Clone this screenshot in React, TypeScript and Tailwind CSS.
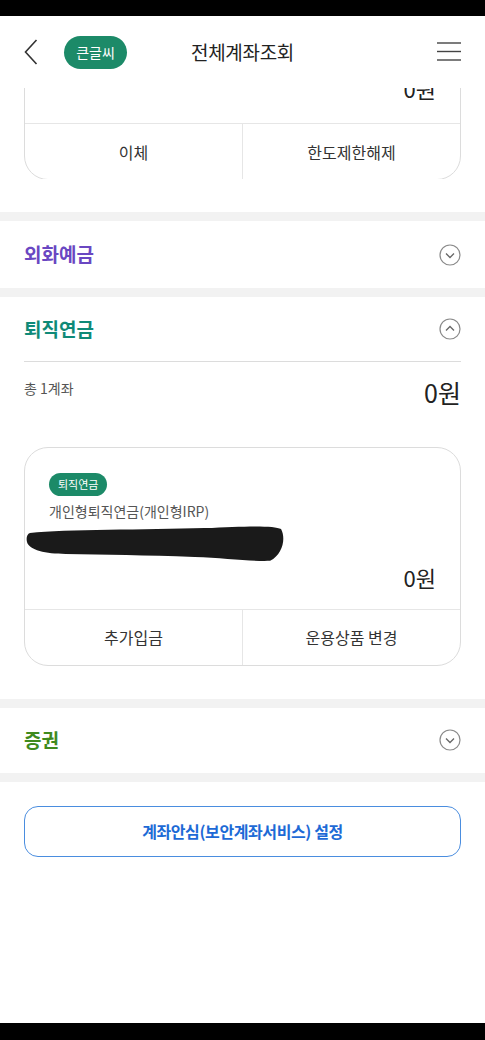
import React from 'react';

const ChevronCircle: React.FC<{ up?: boolean }> = ({ up }) => (
  <svg width="22" height="22" viewBox="0 0 22 22" fill="none">
    <circle cx="11" cy="11" r="10" stroke="#8a8a8a" strokeWidth="1.2" />
    {up ? (
      <polyline points="7,12.5 11,8.5 15,12.5" stroke="#666" strokeWidth="1.3" fill="none" />
    ) : (
      <polyline points="7,9.5 11,13.5 15,9.5" stroke="#666" strokeWidth="1.3" fill="none" />
    )}
  </svg>
);

const Band = () => <div className="h-[9px] bg-[#f2f2f2]" />;

const CardButtons: React.FC<{ left: string; right: string }> = ({ left, right }) => (
  <div className="flex h-[56px] border-t border-[#e6e6e6]">
    <div className="flex-1 flex items-center justify-center text-[16px] text-[#333]">{left}</div>
    <div className="w-px bg-[#e6e6e6]" />
    <div className="flex-1 flex items-center justify-center text-[16px] text-[#333]">{right}</div>
  </div>
);

const App: React.FC = () => {
  return (
    <div
      className="w-[485px] h-[1040px] bg-white flex flex-col overflow-hidden"
      style={{ fontFamily: '"Noto Sans CJK KR", "Noto Sans", sans-serif' }}
    >
      <div className="h-[16px] bg-black shrink-0" />

      {/* header */}
      <div className="h-[72px] shrink-0 grid grid-cols-[1fr_auto_1fr] items-center px-6">
        <div className="flex items-center gap-[26px]">
          <svg width="14" height="26" viewBox="0 0 14 26" fill="none">
            <polyline points="12.5,1 1.5,13 12.5,25" stroke="#333" strokeWidth="1.6" fill="none" />
          </svg>
          <div className="h-[33px] w-[63px] rounded-full bg-[#1c8a68] text-white text-[14px] flex items-center justify-center">
            큰글씨
          </div>
        </div>
        <div className="text-[19px] text-[#222] tracking-[-0.3px]">전체계좌조회</div>
        <div className="flex justify-end">
          <svg width="24" height="20" viewBox="0 0 24 20" fill="none">
            <line x1="0" y1="1" x2="24" y2="1" stroke="#444" strokeWidth="1.4" />
            <line x1="0" y1="9.5" x2="24" y2="9.5" stroke="#444" strokeWidth="1.4" />
            <line x1="0" y1="18" x2="24" y2="18" stroke="#444" strokeWidth="1.4" />
          </svg>
        </div>
      </div>

      {/* clipped card from the section above */}
      <div className="h-[91px] overflow-hidden px-6 shrink-0">
        <div className="-mt-[46px] rounded-[24px] border border-[#dcdcdc]">
          <div className="h-[80px] flex items-end justify-end pr-6 pb-[23px]">
            <span className="text-[22px] leading-[24px] text-[#222]">0원</span>
          </div>
          <CardButtons left="이체" right="한도제한해제" />
        </div>
      </div>

      <div className="h-[33px] shrink-0" />
      <Band />

      {/* 외화예금 */}
      <div className="h-[67px] px-6 flex items-center justify-between">
        <span className="text-[19px] font-bold text-[#6a47c2]">외화예금</span>
        <ChevronCircle />
      </div>
      <Band />

      {/* 퇴직연금 */}
      <div className="px-6">
        <div className="h-[65px] flex items-center justify-between border-b border-[#dcdcdc]">
          <span className="text-[19px] font-bold text-[#0f8a78]">퇴직연금</span>
          <ChevronCircle up />
        </div>
        <div className="flex justify-between items-start pt-[16px]">
          <span className="text-[14px] text-[#555]">총 1계좌</span>
          <span className="text-[25px] leading-[30px] text-[#222] -mt-[1px]">0원</span>
        </div>
        <div className="mt-[40px] rounded-[24px] border border-[#dcdcdc]">
          <div className="pl-6 pr-6 pt-[22px] pb-[19px]">
            <div className="inline-flex h-[23px] px-[9px] rounded-full bg-[#1c8a68] text-white text-[11px] items-center">
              퇴직연금
            </div>
            <div className="mt-[5px] text-[14px] leading-[20px] text-[#555]">개인형퇴직연금(개인형IRP)</div>
            <svg className="-ml-[23px] mt-[3px] block" width="260" height="40" viewBox="0 0 262 40">
              <path
                d="M4,9 C40,5 120,6 180,4 C220,2 250,1 257,5 C262,14 259,30 246,37 C230,38 200,34 170,33 C120,31 80,31 40,30 C20,30 3,26 1,18 C0,14 1,10 4,9 Z"
                fill="#1a1a1a"
              />
            </svg>
            <div className="flex justify-end">
              <span className="text-[22px] leading-[26px] text-[#222]">0원</span>
            </div>
          </div>
          <CardButtons left="추가입금" right="운용상품 변경" />
        </div>
      </div>

      <div className="h-[33px] shrink-0" />
      <Band />

      {/* 증권 */}
      <div className="h-[65px] px-6 flex items-center justify-between">
        <span className="text-[19px] font-bold text-[#3f8a1e]">증권</span>
        <ChevronCircle />
      </div>
      <Band />

      <div className="px-6 pt-[24px]">
        <div className="h-[51px] rounded-[14px] border border-[#4a8ddf] flex items-center justify-center text-[16px] font-bold text-[#1d6ad6] tracking-[-0.4px]">
          계좌안심(보안계좌서비스) 설정
        </div>
      </div>

      <div className="flex-1" />
      <div className="h-[17px] bg-black shrink-0" />
    </div>
  );
};

export default App;
